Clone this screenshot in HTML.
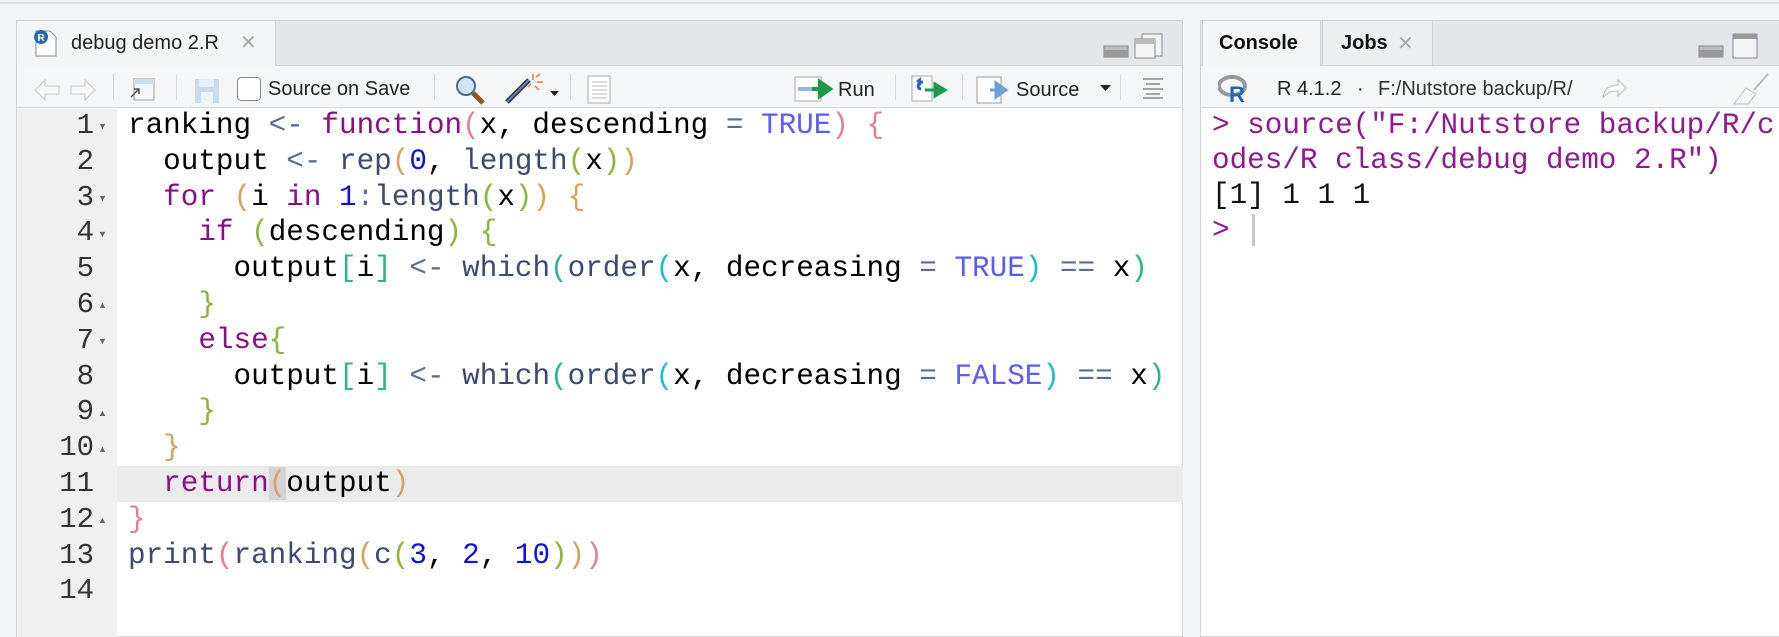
<!DOCTYPE html>
<html><head><meta charset="utf-8"><style>
*{margin:0;padding:0;box-sizing:border-box}
body{width:1779px;height:637px;background:#f3f4f5;position:relative;overflow:hidden;font-family:"Liberation Sans",sans-serif}
.abs{position:absolute}
.code{font-family:"Liberation Mono","DejaVu Sans Mono",monospace;font-size:29.3px;white-space:pre;line-height:35.8px;height:35.8px}
.sep{position:absolute;top:74px;width:1px;height:26px;background:#d5d8dc}
.ui{font-size:20px;color:#222;position:absolute}
.k{color:#8e0d83}.f{color:#3b4a6e}.o{color:#5a6d8c}.b{color:#5b5bf5}.n{color:#1010e0}
.p1{color:#e57d92}.p2{color:#d6a25c}.p3{color:#8cb43e}.p4{color:#2db68b}.p5{color:#1bbbd0}
.ln{position:absolute;left:16px;width:78px;text-align:right;font-family:"Liberation Mono",monospace;font-size:29px;color:#333;line-height:35.8px}
.fa{position:absolute;left:98px;font-size:9px;color:#666}
</style></head><body>
<div class="abs" style="left:0;top:2px;width:1779px;height:2px;background:#dcdcdc"></div>

<div class="abs" style="left:16px;top:20px;width:1167px;height:617px;background:#fff;border:1px solid #d0d3d6"></div>
<div class="abs" style="left:16px;top:20px;width:1167px;height:46px;background:#e4e6e9;border:1px solid #d0d3d6"></div>
<div class="abs" style="left:16px;top:20px;width:260px;height:47px;background:#f4f5f6;border:1px solid #d0d3d6;border-bottom:none;border-radius:3px 3px 0 0"></div>
<svg class="abs" style="left:30px;top:27px" width="32" height="32"><path d="M6 4h14l6 6v19H6z" fill="#fff" stroke="#888"/><circle cx="11" cy="10" r="7" fill="#2468b0"/><text x="7.5" y="14" font-size="10" fill="#fff" font-family="Liberation Sans" font-weight="bold">R</text></svg>
<div class="ui" style="left:71px;top:32px;font-size:20px">debug demo 2.R</div>
<div class="ui" style="left:240px;top:30px;color:#aaa;font-size:20px">✕</div>
<svg class="abs" style="left:1103px;top:32px" width="64" height="28"><rect x="1" y="14" width="24" height="11" fill="#bbb" stroke="#888"/><rect x="1" y="18" width="24" height="7" fill="#999"/><rect x="39" y="2" width="20" height="22" fill="#f4f4f4" stroke="#888"/><rect x="32" y="7" width="20" height="19" fill="#f4f4f4" stroke="#888"/><rect x="32" y="7" width="20" height="5" fill="#bbb"/></svg>
<div class="abs" style="left:17px;top:66px;width:1165px;height:42px;background:#f4f6f8;border-bottom:1px solid #d5d8dc"></div>
<svg class="abs" style="left:33px;top:78px" width="66" height="24"><path d="M2 12l10-10v6h14v8H12v6z" fill="#f8f8f8" stroke="#c8c8c8"/><path d="M62 12L52 2v6H38v8h14v6z" fill="#f8f8f8" stroke="#c8c8c8"/></svg>
<div class="sep" style="left:113px"></div>
<svg class="abs" style="left:128px;top:77px" width="28" height="26"><rect x="6" y="2" width="20" height="21" fill="#f4f8fc" stroke="#999"/><rect x="6" y="2" width="20" height="5" fill="#cfe0f0"/><path d="M3 20l8-8M6 12h5v5" stroke="#555" fill="none" stroke-width="1.5"/></svg>
<div class="sep" style="left:176px"></div>
<svg class="abs" style="left:194px;top:78px" width="26" height="26"><rect x="1" y="1" width="24" height="24" fill="#c9dcee"/><rect x="5" y="1" width="15" height="8" fill="#e4eef8"/><rect x="7" y="14" width="12" height="11" fill="#eef4fa"/></svg>
<div class="abs" style="left:237px;top:77px;width:24px;height:24px;border:1.5px solid #888;border-radius:4px;background:#fff"></div>
<div class="ui" style="left:268px;top:78px">Source on Save</div>
<div class="sep" style="left:434px"></div>
<svg class="abs" style="left:454px;top:74px" width="32" height="32"><circle cx="12" cy="12" r="9" fill="#cfe6fa" stroke="#4a6a8a" stroke-width="2"/><path d="M19 19l10 10" stroke="#8a5a20" stroke-width="5"/></svg>
<svg class="abs" style="left:503px;top:72px" width="60" height="34"><path d="M4 30L26 8" stroke="#333" stroke-width="5"/><path d="M4 30L26 8" stroke="#5b86c0" stroke-width="2"/><path d="M30 2v6M34 10h6M28 12l-3 3M33 5l4-3M32 14l4 4" stroke="#f07a3a" stroke-width="1.5"/><path d="M47 19h9l-4.5 5z" fill="#222"/></svg>
<div class="sep" style="left:570px"></div>
<svg class="abs" style="left:585px;top:75px" width="28" height="30"><rect x="3" y="1" width="22" height="27" fill="#fff" stroke="#aaa"/><path d="M7 7h15M7 11h15M7 15h15M7 19h15M7 23h15" stroke="#bbb"/></svg>
<svg class="abs" style="left:794px;top:76px" width="42" height="26"><rect x="1" y="1" width="26" height="24" fill="#fff" stroke="#aaa"/><rect x="4" y="11" width="14" height="4" fill="#9ab8dc"/><path d="M18 13h10M26 6l10 7-10 7z" fill="#1a9a4a" stroke="#1a9a4a" stroke-width="4"/></svg>
<div class="ui" style="left:838px;top:79px">Run</div>
<div class="sep" style="left:895px"></div>
<svg class="abs" style="left:911px;top:75px" width="38" height="28"><rect x="1" y="1" width="20" height="25" fill="#fff" stroke="#aaa"/><path d="M12 7C6 7 6 14 10 14" stroke="#2566c0" stroke-width="3" fill="none"/><path d="M5 6l5-4v9z" fill="#2566c0"/><path d="M14 15h12M24 9l10 6-10 6z" fill="#1a9a4a" stroke="#1a9a4a" stroke-width="3"/></svg>
<div class="sep" style="left:962px"></div>
<svg class="abs" style="left:976px;top:76px" width="38" height="28"><rect x="1" y="1" width="24" height="26" fill="#fff" stroke="#999"/><path d="M14 14h8M20 7l10 7-10 7z" fill="#6aa2d8" stroke="#6aa2d8" stroke-width="3"/></svg>
<div class="ui" style="left:1016px;top:79px">Source</div>
<svg class="abs" style="left:1100px;top:85px" width="12" height="8"><path d="M0 0h11l-5.5 6z" fill="#222"/></svg>
<div class="sep" style="left:1120px"></div>
<svg class="abs" style="left:1140px;top:76px" width="26" height="24"><path d="M3 3h20M6 8h14M3 13h20M6 18h14M3 22h20" stroke="#888" stroke-width="1.5"/></svg>
<div class="abs" style="left:17px;top:109px;width:100px;height:528px;background:#f0f0f0"></div>
<div class="abs" style="left:117px;top:466px;width:1066px;height:36px;background:#ebebeb"></div>
<div class="ln" style="top:108px">1</div><div class="ln" style="top:143.8px">2</div><div class="ln" style="top:179.6px">3</div><div class="ln" style="top:215.4px">4</div><div class="ln" style="top:251.2px">5</div><div class="ln" style="top:287px">6</div><div class="ln" style="top:322.8px">7</div><div class="ln" style="top:358.6px">8</div><div class="ln" style="top:394.4px">9</div><div class="ln" style="top:430.2px">10</div><div class="ln" style="top:466px">11</div><div class="ln" style="top:501.8px">12</div><div class="ln" style="top:537.6px">13</div><div class="ln" style="top:573.4px">14</div>
<div class="fa" style="top:121px">▼</div><div class="fa" style="top:193px">▼</div><div class="fa" style="top:229px">▼</div><div class="fa" style="top:300px">▲</div><div class="fa" style="top:336px">▼</div><div class="fa" style="top:408px">▲</div><div class="fa" style="top:444px">▲</div><div class="fa" style="top:515px">▲</div>
<div class="abs" style="left:128px;top:108px;width:1054px;overflow:hidden">
<div class="code">ranking <span class="o">&lt;-</span> <span class="k">function</span><span class="p1">(</span>x, descending <span class="o">=</span> <span class="b">TRUE</span><span class="p1">)</span> <span class="p1">{</span></div>
<div class="code">  output <span class="o">&lt;-</span> <span class="f">rep</span><span class="p2">(</span><span class="n">0</span>, <span class="f">length</span><span class="p3">(</span>x<span class="p3">)</span><span class="p2">)</span></div>
<div class="code">  <span class="k">for</span> <span class="p2">(</span>i <span class="k">in</span> <span class="n">1</span><span class="o">:</span><span class="f">length</span><span class="p3">(</span>x<span class="p3">)</span><span class="p2">)</span> <span class="p2">{</span></div>
<div class="code">    <span class="k">if</span> <span class="p3">(</span>descending<span class="p3">)</span> <span class="p3">{</span></div>
<div class="code">      output<span class="p4">[</span>i<span class="p4">]</span> <span class="o">&lt;-</span> <span class="f">which</span><span class="p4">(</span><span class="f">order</span><span class="p5">(</span>x, decreasing <span class="o">=</span> <span class="b">TRUE</span><span class="p5">)</span> <span class="o">==</span> x<span class="p4">)</span></div>
<div class="code">    <span class="p3">}</span></div>
<div class="code">    <span class="k">else</span><span class="p3">{</span></div>
<div class="code">      output<span class="p4">[</span>i<span class="p4">]</span> <span class="o">&lt;-</span> <span class="f">which</span><span class="p4">(</span><span class="f">order</span><span class="p5">(</span>x, decreasing <span class="o">=</span> <span class="b">FALSE</span><span class="p5">)</span> <span class="o">==</span> x<span class="p4">)</span></div>
<div class="code">    <span class="p3">}</span></div>
<div class="code">  <span class="p2">}</span></div>
<div class="code">  <span class="k">return</span><span class="p2" style="background:#d4d4d4">(</span>output<span class="p2">)</span></div>
<div class="code"><span class="p1">}</span></div>
<div class="code"><span class="f">print</span><span class="p1">(</span><span class="f">ranking</span><span class="p2">(</span><span class="f">c</span><span class="p3">(</span><span class="n">3</span>, <span class="n">2</span>, <span class="n">10</span><span class="p3">)</span><span class="p2">)</span><span class="p1">)</span></div>
</div>

<div class="abs" style="left:1200px;top:20px;width:590px;height:617px;background:#fff;border:1px solid #d0d3d6"></div>
<div class="abs" style="left:1200px;top:20px;width:590px;height:46px;background:#e4e6e9;border:1px solid #d0d3d6"></div>
<div class="abs" style="left:1202px;top:20px;width:119px;height:47px;background:#f4f5f6;border:1px solid #d0d3d6;border-bottom:none"></div>
<div class="abs" style="left:1322px;top:20px;width:111px;height:46px;background:#eceef0;border:1px solid #d0d3d6"></div>
<div class="ui" style="left:1219px;top:32px;font-weight:bold;color:#111">Console</div>
<div class="ui" style="left:1341px;top:32px;font-weight:bold;color:#111">Jobs</div>
<div class="ui" style="left:1397px;top:31px;color:#aaa">✕</div>
<svg class="abs" style="left:1698px;top:32px" width="64" height="28"><rect x="1" y="14" width="24" height="11" fill="#bbb" stroke="#888"/><rect x="1" y="18" width="24" height="7" fill="#999"/><rect x="35" y="2" width="24" height="24" fill="#f4f4f4" stroke="#888"/><rect x="35" y="2" width="24" height="5" fill="#999"/></svg>
<div class="abs" style="left:1201px;top:66px;width:578px;height:42px;background:#f4f6f8;border-bottom:1px solid #d5d8dc"></div>
<svg class="abs" style="left:1218px;top:75px" width="34" height="28"><ellipse cx="14" cy="11" rx="13" ry="9" fill="none" stroke="#999" stroke-width="4"/><text x="11" y="27" font-size="22" font-weight="bold" fill="#1f65b7" font-family="Liberation Sans">R</text></svg>
<div class="ui" style="left:1277px;top:78px">R 4.1.2</div>
<div class="ui" style="left:1357px;top:78px">·</div>
<div class="ui" style="left:1378px;top:78px;color:#333">F:/Nutstore backup/R/</div>
<svg class="abs" style="left:1600px;top:78px" width="28" height="22"><path d="M3 20C4 10 10 7 18 7V2l8 8-8 8v-5C12 13 7 14 3 20z" fill="#fff" stroke="#bbb"/></svg>
<svg class="abs" style="left:1732px;top:72px" width="38" height="34"><path d="M36 2L22 18" stroke="#bbb" stroke-width="2"/><path d="M14 16l10 6-8 10H2z" fill="#f6f6f6" stroke="#bbb"/></svg>
<div class="abs" style="left:1212px;top:108px;width:567px;overflow:hidden;color:#8f1a8f">
<div class="code" style="line-height:35px;height:35px">&gt; source("F:/Nutstore backup/R/c</div>
<div class="code" style="line-height:35px;height:35px">odes/R class/debug demo 2.R")</div>
<div class="code" style="line-height:35px;height:35px;color:#111">[1] 1 1 1</div>
<div class="code" style="line-height:35px;height:35px">&gt; </div>
</div>
<div class="abs" style="left:1252px;top:214px;width:3px;height:32px;background:#c8c8c8"></div>
</body></html>
